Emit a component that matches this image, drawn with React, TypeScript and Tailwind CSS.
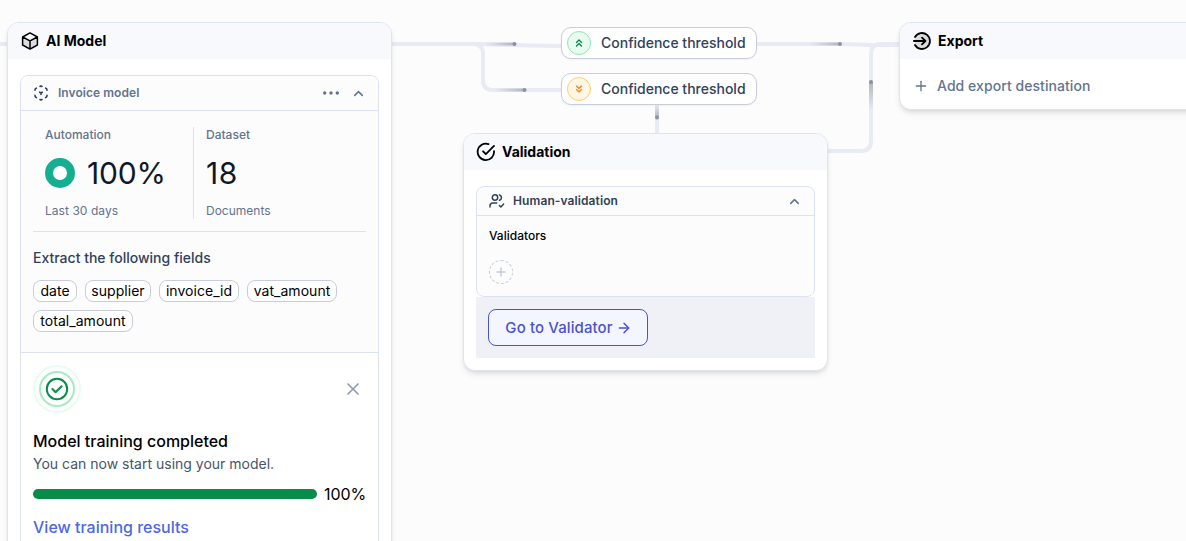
import type { ReactNode } from "react";
import { ArrowRight, ChevronUp, ChevronsDown, ChevronsUp, Plus, X } from "lucide-react";

const FIELDS = [
  { name: "date", width: "w-11" },
  { name: "supplier", width: "w-[66px]" },
  { name: "invoice_id", width: "w-20" },
  { name: "vat_amount", width: "w-[90px]" },
  { name: "total_amount", width: "w-[100px]" },
];

function Node({ className, icon, title, children }: { className: string; icon: ReactNode; title: string; children: ReactNode }) {
  return (
    <section className={`absolute overflow-hidden rounded-xl border border-[#dfe5f0] bg-white shadow-md ${className}`}>
      <header className="flex h-9 items-center gap-[7px] bg-[#f8f9fd] pl-[13px] text-sm font-bold text-black">
        <span className="flex w-[18px] shrink-0 justify-center">{icon}</span>
        <h2 className="leading-5">{title}</h2>
      </header>
      {children}
    </section>
  );
}

function CubeIcon() {
  return (
    <svg className="size-[18px]" viewBox="0 0 18 18" fill="none" stroke="currentColor" strokeWidth="1.5" strokeLinecap="round" strokeLinejoin="round">
      <path d="M1.600 5 9 8.800v8.300L1.600 13zM16.400 5 9 8.800v8.300l7.400-4.100z" fill="#dcdcdc" stroke="none" />
      <path d="M9 .9 16.400 5v8L9 17.100 1.600 13V5zM1.600 5 9 8.900 16.400 5M9 8.900v8.200" />
    </svg>
  );
}

function ModelIcon() {
  return (
    <svg className="size-4 text-slate-700" viewBox="0 0 16 16" fill="none" stroke="currentColor" strokeWidth="1.6" strokeLinecap="round" strokeLinejoin="round">
      <path d="M7 1.500 8 1l1 .5M12.600 3.100l1.100.7.3 1.300M14 10.300l-.2 1.400-1.200.9M9 14.500l-1 .5-1-.5M3.400 12.600l-1.200-.9-.2-1.400M2 5.100l.3-1.300 1.100-.7M6.700 7.200 8 8l1.300-.8M8 8v1.500" />
    </svg>
  );
}

function ExportIcon() {
  return (
    <svg className="size-[18px]" viewBox="0 0 18 18" fill="none" stroke="currentColor" strokeWidth="1.8" strokeLinecap="round" strokeLinejoin="round">
      <circle cx="9" cy="9" r="7.5" fill="#dcdcdc" stroke="none" />
      <path d="M2 5A8 8 0 1 1 2 13M.9 9h11.400M9 5.600 12.400 9 9 12.400" />
    </svg>
  );
}

function ValidationIcon() {
  return (
    <svg className="size-5 shrink-0" viewBox="0 0 20 20" fill="none" stroke="currentColor" strokeWidth="1.8" strokeLinecap="round" strokeLinejoin="round">
      <path d="M12.500 2.100A8.200 8.200 0 1 0 18 9.100M7.100 9.300l2.800 2.800L18 3.900" />
    </svg>
  );
}

function UsersIcon() {
  return (
    <svg className="size-4 text-slate-700" viewBox="0 0 16 16" fill="none" stroke="currentColor" strokeWidth="1.500" strokeLinecap="round" strokeLinejoin="round">
      <circle cx="6" cy="4.500" r="2.700" />
      <path d="M10.500 2a2.700 2.700 0 0 1 0 5.200M1 14v-1.200a2.700 2.700 0 0 1 2.700-2.700h4M10.400 12.500l1.500 1.400 2.700-2.800" />
    </svg>
  );
}

function CheckBadge() {
  return (
    <svg className="size-12" viewBox="0 0 48 48" fill="none">
      <circle cx="24" cy="24" r="23" stroke="#e8fcf0" strokeWidth="2" />
      <circle cx="24" cy="24" r="17" stroke="#a5ebc0" strokeWidth="2" />
      <circle cx="24" cy="24" r="10.200" stroke="#078c49" strokeWidth="2" />
      <path d="m19.400 24 3.200 3.200 6-6" stroke="#078c49" strokeWidth="2" strokeLinecap="round" strokeLinejoin="round" />
    </svg>
  );
}

function Connectors() {
  return (
    <svg className="absolute inset-0 h-full w-full" viewBox="0 0 1186 541" fill="none">
      <defs>
        <linearGradient id="right" x1="0" x2="1" y1="0" y2="0">
          <stop stopColor="#e8eaf4" />
          <stop offset="1" stopColor="#b3b6c1" />
        </linearGradient>
        <linearGradient id="up" x1="0" x2="0" y1="1" y2="0">
          <stop stopColor="#e8eaf4" />
          <stop offset="1" stopColor="#b3b6c1" />
        </linearGradient>
        <linearGradient id="down" x1="0" x2="0" y1="0" y2="1">
          <stop stopColor="#e8eaf4" />
          <stop offset="1" stopColor="#b3b6c1" />
        </linearGradient>
      </defs>
      <g stroke="#e8eaf4" strokeWidth="4">
        <path d="M0 44H8M391 44H477L530 45.500 562 46" />
        <path d="M391 44H473Q483 44 483 54V80Q483 90 493 90H562" />
        <path d="M756 44H840L872 45H896L900 44M827 151H861Q871 151 871 141V54Q871 44 881 44H900" />
        <path d="M657 104V134" />
      </g>
      <rect x="485" y="42.500" width="29" height="3" fill="url(#right)" />
      <rect x="495" y="88.500" width="29" height="3" fill="url(#right)" />
      <rect x="810" y="42.500" width="29" height="3" fill="url(#right)" />
      <rect x="869" y="82" width="4" height="28" fill="url(#up)" />
      <rect x="655" y="105" width="4" height="12" fill="url(#down)" />
      <g fill="#8793a5">
        <circle cx="514.500" cy="44" r="2" />
        <circle cx="524.500" cy="90" r="2" />
        <circle cx="840" cy="44" r="2" />
        <circle cx="871" cy="82" r="2" />
        <circle cx="657" cy="117.500" r="2" />
      </g>
    </svg>
  );
}

function Threshold({ className, badge, children }: { className: string; badge: string; children: ReactNode }) {
  return (
    <div className={`absolute left-[561px] flex h-8 w-[196px] items-center gap-2.5 rounded-[10px] border border-[#c9cddb] bg-white pl-[5px] shadow-xs ${className}`}>
      <span className={`flex size-6 shrink-0 items-center justify-center rounded-full border ${badge}`}>{children}</span>
      <span className="whitespace-nowrap text-sm font-medium text-slate-700">Confidence threshold</span>
    </div>
  );
}

export default function App() {
  return (
    <main className="relative h-[541px] w-[1186px] overflow-hidden bg-[#fcfcfc] font-['Inter',sans-serif] text-black antialiased">
      <Connectors />

      <Node className="left-[7px] top-[22px] h-[560px] w-[385px]" title="AI Model" icon={<CubeIcon />}>
        <div className="mx-3 mt-4 h-[540px] overflow-hidden rounded-t-lg border border-[#dce3f0]">
          <div className="flex h-[35px] items-center border-b border-[#dce3f0] bg-[#fcfcfc] pl-3 pr-3">
            <ModelIcon />
            <h3 className="ml-[9px] grow text-xs font-semibold tracking-[0.05px] text-slate-500">Invoice model</h3>
            <svg className="mr-3 h-4 w-4 text-slate-500" viewBox="0 0 16 16" fill="currentColor">
              <circle cx="1.700" cy="8" r="1.700" />
              <circle cx="8" cy="8" r="1.700" />
              <circle cx="14.300" cy="8" r="1.700" />
            </svg>
            <ChevronUp className="size-[15px] text-slate-500" strokeWidth={2.5} />
          </div>
          <div className="h-[242px] border-b border-[#dce3f0] bg-[#fcfcfc] px-3 pt-4">
            <div className="flex border-b border-[#dfe2ee] pb-3">
              <div className="flex h-[92px] w-[161px] flex-col justify-between border-r border-[#dfe2ee] pl-3 text-xs text-slate-500">
                <span className="font-medium">Automation</span>
                <span className="flex items-center gap-3">
                  <span className="size-[30px] rounded-full border-8 border-[#16ae91] bg-white" />
                  <span className="text-[30px] leading-9 tracking-[-0.2px] text-gray-900">100%</span>
                </span>
                <span className="tracking-[0.05px]">Last 30 days</span>
              </div>
              <div className="flex h-[92px] flex-col justify-between pl-3 text-xs text-slate-500">
                <span className="font-medium">Dataset</span>
                <span className="text-[30px] leading-9 tracking-[0.5px] text-gray-900">18</span>
                <span>Documents</span>
              </div>
            </div>
            <h4 className="mt-4 text-sm font-medium text-slate-700">Extract the following fields</h4>
            <ul className="mt-3 flex flex-wrap gap-2">
              {FIELDS.map((field) => (
                <li
                  key={field.name}
                  className={`flex h-[22px] items-center justify-center whitespace-nowrap rounded-lg border border-[#c9cddb] bg-white text-sm tracking-[0.04px] ${field.width}`}
                >
                  {field.name}
                </li>
              ))}
            </ul>
          </div>
          <div className="px-3 pt-3">
            <div className="flex items-center justify-between pr-[3px]">
              <CheckBadge />
              <X className="size-5 text-[#8f9bb3]" strokeWidth={2} />
            </div>
            <h4 className="mt-4 text-base font-medium">Model training completed</h4>
            <p className="mt-px text-sm text-slate-600">You can now start using your model.</p>
            <div className="mt-2 flex items-center justify-between">
              <div className="h-2.5 w-[284px] rounded-full bg-[#078c49]" />
              <span className="text-base tracking-[-0.1px]">100%</span>
            </div>
            <a className="mt-[9px] block text-base font-medium text-[#4d68e1]">View training results</a>
          </div>
        </div>
      </Node>

      <Threshold className="top-[27px]" badge="border-[#92e5b4] bg-[#e7fcef] text-[#078c49]">
        <ChevronsUp className="size-3" strokeWidth={2.8} />
      </Threshold>
      <Threshold className="top-[73px]" badge="border-[#fbcf68] bg-[#fff7e3] text-[#f7871e]">
        <ChevronsDown className="size-3" strokeWidth={2.8} />
      </Threshold>

      <Node className="left-[463px] top-[133px] h-[238px] w-[365px]" title="Validation" icon={<ValidationIcon />}>
        <div className="mx-3 mt-4">
          <div className="h-[111px] overflow-hidden rounded-lg border border-[#dce3f0] bg-[#fcfcfc]">
            <div className="flex h-[29px] items-center border-b border-[#dce3f0] pl-3 pr-3">
              <UsersIcon />
              <h3 className="ml-2 grow text-xs font-semibold tracking-[0.1px] text-slate-700">Human-validation</h3>
              <ChevronUp className="size-[15px] text-slate-500" strokeWidth={2.5} />
            </div>
            <div className="px-3 pt-3">
              <h4 className="text-xs font-medium">Validators</h4>
              <div className="mt-4 flex size-6 items-center justify-center rounded-full border border-dashed border-[#c1cbda] text-[#c1cbda]">
                <Plus className="size-3.5" strokeWidth={2.5} />
              </div>
            </div>
          </div>
          <div className="h-[61px] bg-[#f0f1f6] p-3">
            <button className="flex h-[37px] w-40 items-center justify-center gap-[3px] rounded-lg border border-[#4b53cc] bg-[#f3f6ff] pl-px pt-px text-[15px] font-medium tracking-[0.1px] text-[#4b53cc]">
              Go to Validator
              <ArrowRight className="size-4" strokeWidth={2.2} />
            </button>
          </div>
        </div>
      </Node>

      <Node className="left-[899px] top-[22px] h-[88px] w-[340px]" title="Export" icon={<ExportIcon />}>
        <div className="flex h-[54px] items-center gap-2 pl-[13px] text-slate-500">
          <Plus className="size-4" strokeWidth={2} />
          <span className="text-sm font-medium tracking-[0.06px]">Add export destination</span>
        </div>
      </Node>
    </main>
  );
}
